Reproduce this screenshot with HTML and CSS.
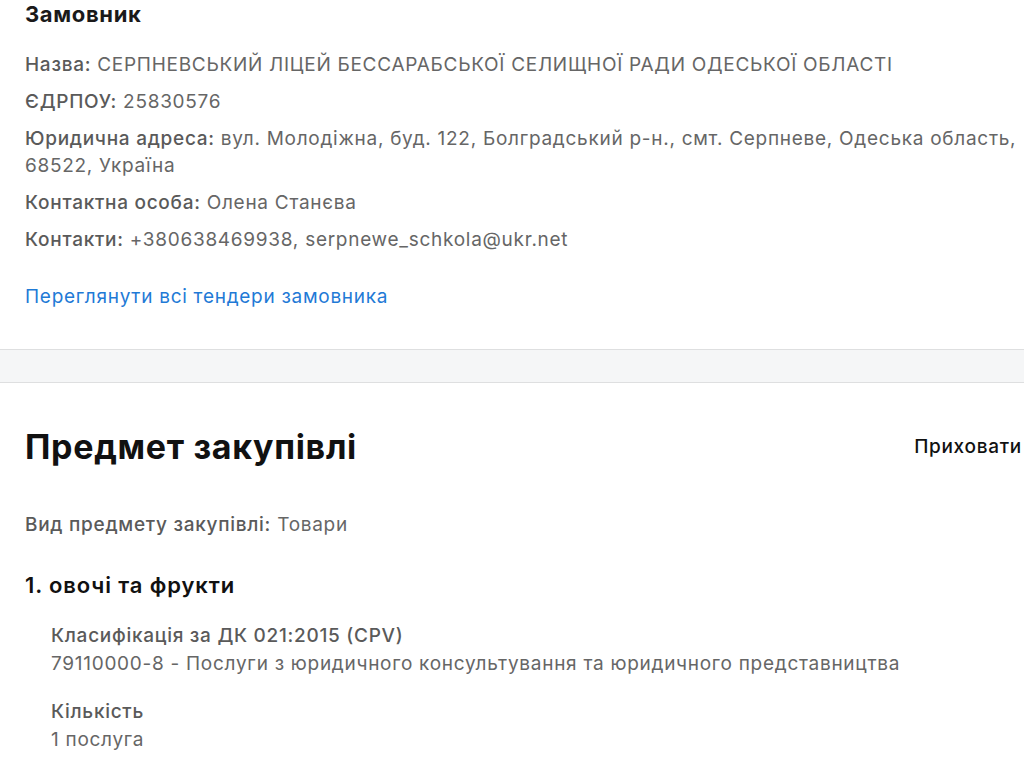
FILE: index.html
```html
<!DOCTYPE html>
<html lang="uk">
<head>
  <meta charset="UTF-8" />
  <title>Замовник</title>
  <meta name="viewport" content="width=device-width, initial-scale=1.0"/>
  <link rel="stylesheet" href="styles.css">
</head>
<body>

<section class="block customer">
  <h3 class="block-title">Замовник</h3>
  <ul class="info-list">
    <li><span class="label">Назва:</span> СЕРПНЕВСЬКИЙ ЛІЦЕЙ БЕССАРАБСЬКОЇ СЕЛИЩНОЇ РАДИ ОДЕСЬКОЇ ОБЛАСТІ</li>
    <li><span class="label">ЄДРПОУ:</span> 25830576</li>
    <li><span class="label">Юридична адреса:</span> вул. Молодіжна, буд. 122, Болградський р-н., смт. Серпневе, Одеська область, 68522, Україна</li>
    <li><span class="label">Контактна особа:</span> Олена Станєва</li>
    <li><span class="label">Контакти:</span> +380638469938, serpnewe_schkola@ukr.net</li>
  </ul>
  <a class="link" href="#">Переглянути всі тендери замовника</a>
</section>

<div class="divider"></div>

<section class="block subject">
  <div class="subject-head">
    <h2>Предмет закупівлі</h2>
    <button class="toggle">Приховати</button>
  </div>

  <p class="kind"><span class="label">Вид предмету закупівлі:</span> Товари</p>

  <div class="lot">
    <h4 class="lot-title">1. овочі та фрукти</h4>
    <dl class="lot-details">
      <dt>Класифікація за ДК 021:2015 (CPV)</dt>
      <dd>79110000-8 - Послуги з юридичного консультування та юридичного представництва</dd>
      <dt>Кількість</dt>
      <dd>1 послуга</dd>
    </dl>
  </div>
</section>

</body>
</html>
```

FILE: styles.css
```css
html, body {
  overflow-x: hidden;
}

body {
  margin: 0;
  font-family: Inter, 'Noto Sans', sans-serif;
  letter-spacing: 0.045em;
  background-color: #fff;
  color: #666;
}

.block {
  padding: 0 0 0 25px;
}

.customer {
  padding-top: 1px;
  padding-bottom: 41px;
}

.block-title {
  margin: 0;
  font-size: 22px;
  font-weight: 700;
  letter-spacing: 0.03em;
  color: #1a1a1a;
}

.info-list {
  list-style: none;
  margin: 24px 0 0;
  padding: 0;
  font-size: 19px;
  line-height: 27px;
}

.info-list li {
  margin-bottom: 10px;
}

.label {
  font-weight: 500;
  color: #5a5a5a;
}

.link {
  display: inline-block;
  margin-top: 22px;
  font-size: 19px;
  color: #1f7ad6;
  text-decoration: none;
}

.divider {
  height: 32px;
  background-color: #f5f6f7;
  border-top: 1px solid #dedfe0;
  border-bottom: 1px solid #dedfe0;
}

.subject-head {
  display: flex;
  justify-content: space-between;
  align-items: center;
  margin-top: 43px;
  padding-right: 2px;
}

.subject-head h2 {
  margin: 0;
  font-size: 34px;
  font-weight: 700;
  letter-spacing: 0.02em;
  color: #111;
}

.toggle {
  font-family: inherit;
  letter-spacing: inherit;
  font-size: 19px;
  font-weight: 500;
  color: #111;
  background: none;
  border: none;
  padding: 0;
  cursor: pointer;
}

.kind {
  margin: 46px 0 0;
  font-size: 19px;
}

.lot-title {
  margin: 36px 0 0;
  font-size: 22px;
  font-weight: 600;
  letter-spacing: 0.04em;
  color: #111;
}

.lot-details {
  margin: 24px 0 0 26px;
  font-size: 19px;
  line-height: 28px;
}

.lot-details dt {
  font-weight: 500;
  color: #5a5a5a;
}

.lot-details dd {
  margin: 0 0 20px;
}
```
